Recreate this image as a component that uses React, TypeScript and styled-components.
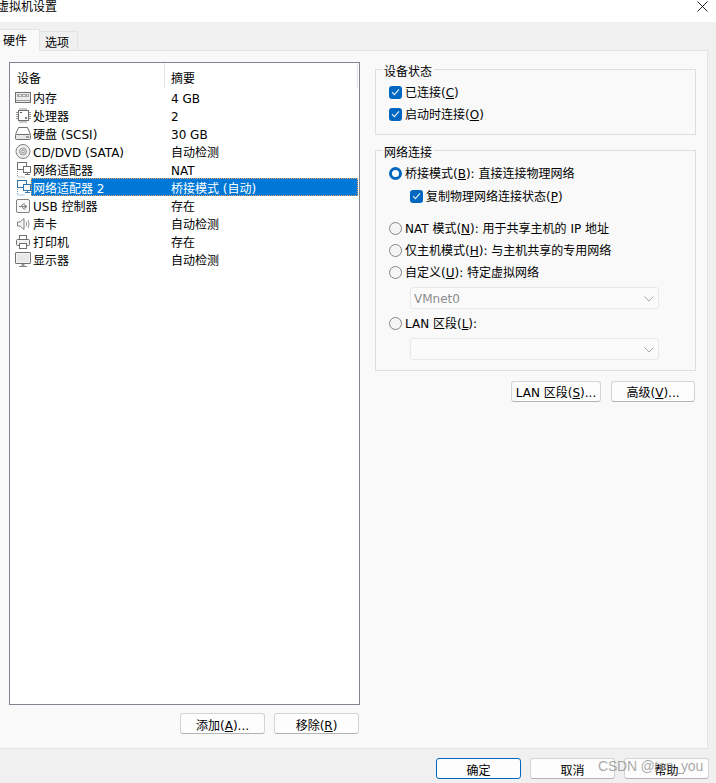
import { ReactNode } from "react";
import styled, { createGlobalStyle } from "styled-components";

const GlobalStyle = createGlobalStyle`
  html, body {
    margin: 0;
    padding: 0;
    background: #f0f0f0;
  }
`;

const Page = styled.div`
  width: 716px;
  height: 783px;
  position: relative;
  overflow: hidden;
  display: flex;
  flex-direction: column;
  background: #f0f0f0;
  color: #000;
  font: 12px/18px "DejaVu Sans", "Noto Sans CJK SC", sans-serif;
`;

const TitleBar = styled.div`
  height: 22px;
  flex: none;
  background: #fff;
  display: flex;
  justify-content: space-between;
  align-items: flex-start;
`;

const Title = styled.div`
  margin-left: -3px;
  line-height: 15px;
`;

const CloseIcon = styled.svg`
  width: 11px;
  height: 11px;
  margin: 1px 8px 0 0;
`;

const TabStrip = styled.div`
  height: 28px;
  flex: none;
  display: flex;
  align-items: flex-start;
`;

const Tab = styled.div<{ $active?: boolean }>`
  box-sizing: border-box;
  position: relative;
  z-index: 1;
  height: ${(p) => (p.$active ? "22px" : "19px")};
  width: ${(p) => (p.$active ? "40px" : "38px")};
  margin-top: ${(p) => (p.$active ? "7px" : "9px")};
  padding-left: ${(p) => (p.$active ? "3px" : "5px")};
  line-height: 23px;
  background: ${(p) => (p.$active ? "#f9f9f9" : "#f0f0f0")};
  border: 1px solid #e3e3e3;
  border-width: 1px 1px 0 0;
`;

const Panel = styled.div`
  flex: 1;
  margin-right: 8px;
  display: flex;
  background: #f9f9f9;
  border: 1px solid #e3e3e3;
  border-width: 1px 1px 1px 0;
`;

const LeftColumn = styled.div`
  width: 351px;
  margin-left: 9px;
  padding-top: 11px;
`;

const DeviceList = styled.div`
  box-sizing: border-box;
  height: 643px;
  background: #fff;
  border: 1px solid #7f848e;
`;

const ListHeader = styled.div`
  height: 25px;
  display: grid;
  grid-template-columns: 155px 193px;
`;

const HeaderCell = styled.div<{ $pad: number }>`
  height: 25px;
  padding: 4px 0 0 ${(p) => p.$pad}px;
  box-sizing: border-box;
  line-height: 24px;
  border-right: 1px solid #e5e5e5;
`;

const Row = styled.div`
  display: flex;
  height: 18px;
`;

const RowIcon = styled.svg`
  width: 18px;
  height: 18px;
  flex: none;
  margin: 1px 0 0 3px;
`;

const RowBody = styled.div<{ $selected?: boolean }>`
  box-sizing: border-box;
  width: 327px;
  height: 18px;
  display: grid;
  grid-template-columns: 138px 1fr;
  padding: 2px 0 0 2px;
  line-height: 18px;
  color: ${(p) => (p.$selected ? "#fff" : "#000")};
  background: ${(p) => (p.$selected ? "#0078d7" : "transparent")};
  outline: ${(p) => (p.$selected ? "1px dotted #f0a060" : "none")};
  outline-offset: -1px;
`;

const Cell = styled.span`
  white-space: pre;
`;

const ListButtons = styled.div`
  display: flex;
  justify-content: flex-end;
  gap: 9px;
  margin: 8px 1px 0 0;
`;

const Button = styled.button<{ $width?: number; $primary?: boolean; $low?: boolean }>`
  box-sizing: border-box;
  width: ${(p) => p.$width ?? 85}px;
  height: 21px;
  padding: ${(p) => (p.$low ? "6px 0 0" : "3px 0 0")};
  background: #fdfdfd;
  border: 1px solid ${(p) => (p.$primary ? "#0067c0" : "#d4d4d4")};
  border-bottom-color: ${(p) => (p.$primary ? "#0067c0" : "#b4b4b4")};
  border-radius: 3px;
  color: #000;
  font: inherit;
  line-height: 13px;
`;

const RightColumn = styled.div`
  width: 321px;
  margin-left: 15px;
  padding-top: 18px;
`;

const Group = styled.section<{ $height: number; $top?: number }>`
  box-sizing: border-box;
  position: relative;
  height: ${(p) => p.$height}px;
  margin-top: ${(p) => p.$top ?? 0}px;
  padding-left: 13px;
  border: 1px solid #dedede;
`;

const Legend = styled.div`
  position: absolute;
  top: -7px;
  left: 7px;
  padding: 0 2px 0 1px;
  background: #f9f9f9;
`;

const OptionRow = styled.div<{ $top: number; $indent?: boolean }>`
  display: flex;
  align-items: center;
  height: 18px;
  gap: 3px;
  margin-top: ${(p) => p.$top}px;
  margin-left: ${(p) => (p.$indent ? "21px" : "0")};
`;

const OptionLabel = styled.span`
  padding-top: 1px;
`;

const CheckBox = styled.span`
  box-sizing: border-box;
  width: 13px;
  height: 13px;
  flex: none;
  border-radius: 3px;
  background: #0067c0;
  display: flex;
  align-items: center;
  justify-content: center;
`;

const Radio = styled.span<{ $on?: boolean }>`
  box-sizing: border-box;
  width: 13px;
  height: 13px;
  flex: none;
  border-radius: 50%;
  background: ${(p) => (p.$on ? "#fff" : "#f5f5f5")};
  border: ${(p) => (p.$on ? "3.5px solid #0067c0" : "1px solid #858585")};
`;

const Select = styled.div<{ $top: number }>`
  box-sizing: border-box;
  width: 249px;
  height: 22px;
  margin: ${(p) => p.$top}px 0 0 21px;
  padding: 1px 3px 0 3px;
  display: flex;
  align-items: center;
  justify-content: space-between;
  background: #fbfbfb;
  border: 1px solid #e8e8e8;
  border-radius: 3px;
  color: #8c8c8c;
`;

const Chevron = styled.svg`
  width: 10px;
  height: 6px;
  margin-right: 1px;
`;

const GroupButtons = styled.div`
  display: flex;
  justify-content: flex-end;
  gap: 10px;
  margin: 10px 1px 0 0;
`;

const Footer = styled.div`
  height: 34px;
  flex: none;
  box-sizing: border-box;
  padding: 9px 7px 0 0;
  display: flex;
  justify-content: flex-end;
  gap: 9px;
`;

const Watermark = styled.div`
  position: absolute;
  left: 598px;
  top: 757px;
  color: rgba(130, 130, 130, 0.7);
  letter-spacing: -0.2px;
  font: 14px/18px "Liberation Sans", sans-serif;
`;

const stroke = "#6e6e6e";

const icons: Record<string, ReactNode> = {
  memory: (
    <>
      <rect x="2.5" y="3.5" width="15" height="10" fill="#ececec" stroke={stroke} />
      <rect x="4" y="5" width="12" height="3" fill="#a8a8a8" />
      <path d="M6 6.5h2M10 6.5h2M14 6.5h1" stroke="#f4f4f4" />
      <path d="M3 11.5h14" stroke="#9a9a9a" />
    </>
  ),
  cpu: (
    <>
      <rect x="5.5" y="3.5" width="10" height="10" fill="#fff" stroke={stroke} />
      <path d="M7 1v2M9 1v2M11 1v2M13 1v2M7 14v2M9 14v2M11 14v2M13 14v2M3 5.5h2M3 7.5h2M3 9.5h2M3 11.5h2M16 5.5h2M16 7.5h2M16 9.5h2M16 11.5h2" stroke="#969696" />
      <rect x="7" y="5" width="2" height="1" fill="#555" />
      <rect x="12" y="10" width="2" height="2" fill="#777" />
    </>
  ),
  disk: (
    <>
      <path d="M2.5 9.5 L5.5 2.5 H14.5 L17.5 9.5" fill="#fff" stroke={stroke} />
      <rect x="2.5" y="9.5" width="15" height="5" rx="1" fill="#e8e8e8" stroke={stroke} />
      <path d="M13 12h3" stroke="#555" />
    </>
  ),
  cd: (
    <>
      <circle cx="10" cy="8.5" r="7" fill="#efefef" stroke="#808080" />
      <circle cx="10" cy="8.5" r="3.5" fill="#cdcdcd" stroke="#a0a0a0" />
      <circle cx="10" cy="8.5" r="1.2" fill="#fff" stroke="#777" strokeWidth="0.6" />
    </>
  ),
  network: (
    <>
      <rect x="4.5" y="1.5" width="9" height="7" fill="#fff" stroke={stroke} />
      <rect x="10.5" y="5.5" width="7" height="6" fill="#fff" stroke={stroke} />
      <path d="M14.5 11.5v2M12 13.5h5" stroke={stroke} />
      <path d="M4.5 10v6h8" stroke="#888" strokeDasharray="1 1" fill="none" />
    </>
  ),
  networkActive: (
    <>
      <rect x="4.5" y="1.5" width="9" height="7" fill="#fff" stroke="#2f76ae" />
      <rect x="10.5" y="5.5" width="7" height="6" fill="#fff" stroke="#2f76ae" />
      <path d="M14.5 11.5v2M12 13.5h5" stroke="#2f76ae" />
      <path d="M4.5 10v6h8" stroke="#5c95c2" strokeDasharray="1 1" fill="none" />
    </>
  ),
  usb: (
    <>
      <rect x="3.5" y="2.5" width="13" height="13" rx="1.5" fill="#fafafa" stroke="#808080" />
      <path d="M6 9.5h8M14 9.5l-2-1.5v3zM8 9.5l2-2.5h2M9 9.5l1.5 2.5h2" stroke="#808080" fill="none" />
    </>
  ),
  sound: (
    <>
      <path d="M4.5 7h2.5L11 3.5v11L7 11H4.5z" fill="#f4f4f4" stroke="#808080" />
      <path d="M13 6.5q1.3 2.5 0 5M15 5q2.2 4 0 8" stroke="#969696" fill="none" />
    </>
  ),
  printer: (
    <>
      <rect x="6.5" y="2.5" width="7" height="4" fill="#fff" stroke={stroke} />
      <rect x="3.5" y="6.5" width="13" height="6" rx="1" fill="#f2f2f2" stroke={stroke} />
      <rect x="6.5" y="10.5" width="7" height="5" fill="#fff" stroke={stroke} />
    </>
  ),
  display: (
    <>
      <rect x="2.5" y="1.5" width="15" height="11" rx="0.5" fill="#f4f4f4" stroke="#707070" />
      <rect x="4" y="3" width="12" height="8" fill="#e8e8e8" />
      <path d="M10 13v2" stroke="#999" strokeWidth="3" />
      <path d="M6 15.5h8" stroke="#808080" />
    </>
  ),
};

const devices = [
  { icon: "memory", name: "内存", summary: "4 GB" },
  { icon: "cpu", name: "处理器", summary: "2" },
  { icon: "disk", name: "硬盘 (SCSI)", summary: "30 GB" },
  { icon: "cd", name: "CD/DVD (SATA)", summary: "自动检测" },
  { icon: "network", name: "网络适配器", summary: "NAT" },
  { icon: "networkActive", name: "网络适配器 2", summary: "桥接模式 (自动)", selected: true },
  { icon: "usb", name: "USB 控制器", summary: "存在" },
  { icon: "sound", name: "声卡", summary: "自动检测" },
  { icon: "printer", name: "打印机", summary: "存在" },
  { icon: "display", name: "显示器", summary: "自动检测" },
];

function Check() {
  return (
    <CheckBox>
      <svg width="9" height="8" viewBox="0 0 9 8">
        <path d="M1 4.2 3.4 6.6 8 1.4" fill="none" stroke="#dfeefa" strokeWidth="1.2" />
      </svg>
    </CheckBox>
  );
}

function Arrow() {
  return (
    <Chevron viewBox="0 0 10 6">
      <path d="M.5.5 5 5 9.5.5" fill="none" stroke="#a8a8a8" />
    </Chevron>
  );
}

export default function App() {
  return (
    <Page>
      <GlobalStyle />
      <TitleBar>
        <Title>虚拟机设置</Title>
        <CloseIcon viewBox="0 0 11 11">
          <path d="M.5.5l10 10M10.5.5l-10 10" stroke="#222" fill="none" />
        </CloseIcon>
      </TitleBar>
      <TabStrip>
        <Tab $active>硬件</Tab>
        <Tab>选项</Tab>
      </TabStrip>
      <Panel>
        <LeftColumn>
          <DeviceList>
            <ListHeader>
              <HeaderCell $pad={7}>设备</HeaderCell>
              <HeaderCell $pad={6}>摘要</HeaderCell>
            </ListHeader>
            {devices.map((d) => (
              <Row key={d.name}>
                <RowIcon viewBox="0 0 18 18">{icons[d.icon]}</RowIcon>
                <RowBody $selected={d.selected}>
                  <Cell>{d.name}</Cell>
                  <Cell>{d.summary}</Cell>
                </RowBody>
              </Row>
            ))}
          </DeviceList>
          <ListButtons>
            <Button $low>添加(<u>A</u>)...</Button>
            <Button $low>移除(<u>R</u>)</Button>
          </ListButtons>
        </LeftColumn>
        <RightColumn>
          <Group $height={66}>
            <Legend>设备状态</Legend>
            <OptionRow $top={13}>
              <Check />
              <OptionLabel>已连接(<u>C</u>)</OptionLabel>
            </OptionRow>
            <OptionRow $top={4}>
              <Check />
              <OptionLabel>启动时连接(<u>O</u>)</OptionLabel>
            </OptionRow>
          </Group>
          <Group $height={221} $top={15}>
            <Legend>网络连接</Legend>
            <OptionRow $top={13}>
              <Radio $on />
              <OptionLabel>桥接模式(<u>B</u>): 直接连接物理网络</OptionLabel>
            </OptionRow>
            <OptionRow $top={5} $indent>
              <Check />
              <OptionLabel>复制物理网络连接状态(<u>P</u>)</OptionLabel>
            </OptionRow>
            <OptionRow $top={14}>
              <Radio />
              <OptionLabel>NAT 模式(<u>N</u>): 用于共享主机的 IP 地址</OptionLabel>
            </OptionRow>
            <OptionRow $top={4}>
              <Radio />
              <OptionLabel>仅主机模式(<u>H</u>): 与主机共享的专用网络</OptionLabel>
            </OptionRow>
            <OptionRow $top={4}>
              <Radio />
              <OptionLabel>自定义(<u>U</u>): 特定虚拟网络</OptionLabel>
            </OptionRow>
            <Select $top={6}>
              VMnet0
              <Arrow />
            </Select>
            <OptionRow $top={5}>
              <Radio />
              <OptionLabel>LAN 区段(<u>L</u>):</OptionLabel>
            </OptionRow>
            <Select $top={6}>
              <span />
              <Arrow />
            </Select>
          </Group>
          <GroupButtons>
            <Button $width={90}>LAN 区段(<u>S</u>)...</Button>
            <Button $width={84}>高级(<u>V</u>)...</Button>
          </GroupButtons>
        </RightColumn>
      </Panel>
      <Footer>
        <Button $low $primary>确定</Button>
        <Button $low>取消</Button>
        <Button $low>帮助</Button>
      </Footer>
      <Watermark>CSDN @ten_you</Watermark>
    </Page>
  );
}
